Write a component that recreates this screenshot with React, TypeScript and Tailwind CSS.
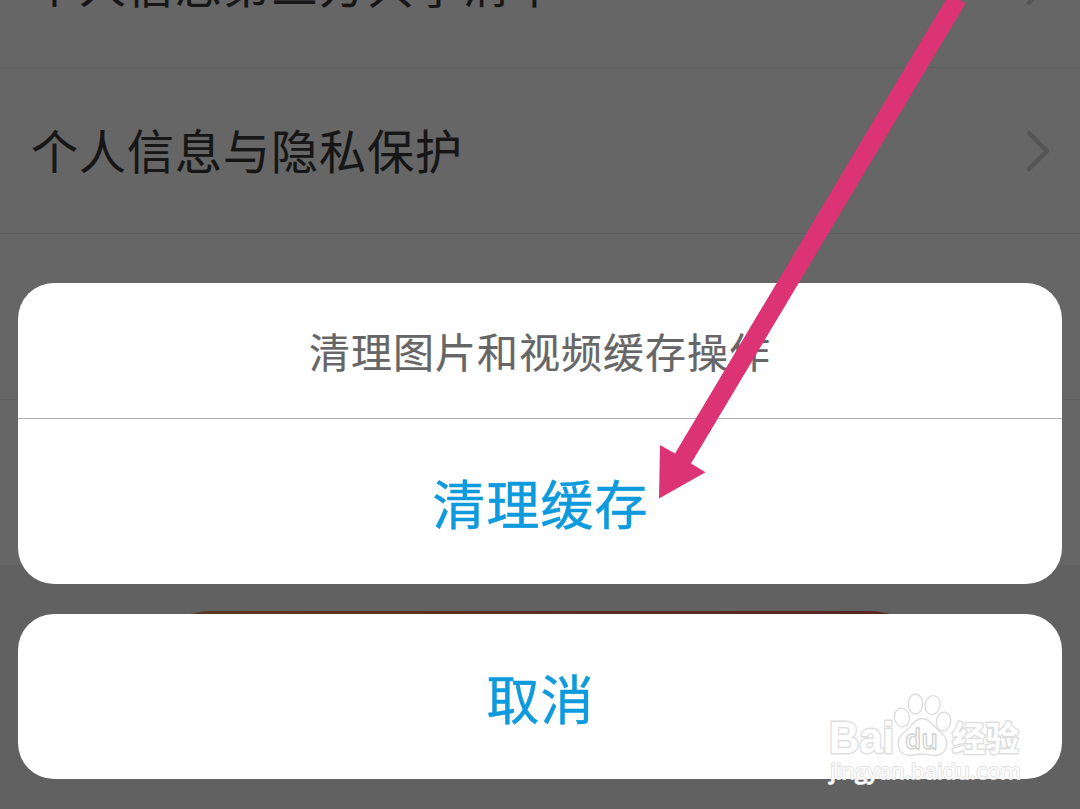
import React from "react";

const Chevron = () => (
  <svg width="26" height="44" viewBox="0 0 26 44" fill="none" className="mr-[29px] shrink-0">
    <path d="M4 4L22 22L4 40" stroke="#555555" strokeWidth="4.5" strokeLinecap="round" strokeLinejoin="round" />
  </svg>
);

const Row = ({ label }: { label?: string }) => (
  <div className="flex h-[166px] shrink-0 items-center justify-between border-b border-[#5f5f5f] pl-[31px]">
    <p className="pb-[4px] text-[47px] leading-[70px] tracking-[1px] text-[#161616] [-webkit-text-stroke:0.2px_#161616]">{label}</p>
    {label && <Chevron />}
  </div>
);

const Arrow = () => (
  <svg width="1080" height="809" viewBox="0 0 1080 809" className="pointer-events-none absolute inset-0">
    <path d="M949.5 -6.5L965.5 3.5L691 463.5L705.5 472.3L659 498.5L660 445L675 453.5Z" fill="#dc3374" />
  </svg>
);

const Watermark = () => (
  <svg width="210" height="100" viewBox="820 690 210 100" className="pointer-events-none absolute left-[820px] top-[690px]">
    <g fill="#fff" stroke="#dcdcdc" strokeWidth="1.3" strokeLinejoin="round">
      <ellipse cx="902" cy="717.5" rx="7.5" ry="9.5" transform="rotate(-8 902 717.5)" />
      <ellipse cx="915.5" cy="704" rx="7.2" ry="10" />
      <ellipse cx="932.5" cy="705" rx="7.5" ry="9.5" transform="rotate(10 932.5 705)" />
      <ellipse cx="943.5" cy="721.5" rx="7.2" ry="9.5" transform="rotate(8 943.5 721.5)" />
      <path d="M922 718.5C914 718.5 912 727 905 731.5C894 739 897 755 909 755.5C914 755.5 917 754 922 754C928 754 931 755.5 936 755.5C948 754 950 741 942 733.5C933 726 930 718.5 922 718.5Z" />
    </g>
    <g fill="#fff" stroke="#dedede" strokeLinejoin="round" fontWeight="700">
      <g strokeWidth="2.8" paintOrder="stroke">
        <text x="829" y="753" fontSize="44" textLength="65" lengthAdjust="spacingAndGlyphs" fontFamily="Liberation Sans, sans-serif">Bai</text>
        <text x="952" y="751" fontSize="34" textLength="67" lengthAdjust="spacingAndGlyphs" fontFamily="Noto Sans CJK SC, sans-serif">经验</text>
      </g>
      <text x="905" y="749" fontSize="27" textLength="33" lengthAdjust="spacingAndGlyphs" fontFamily="Open Sans, sans-serif" fontWeight="600" strokeWidth="1.3" stroke="#cfcfcf">du</text>
      <text x="830" y="779" fontSize="22" textLength="191" lengthAdjust="spacingAndGlyphs" fontFamily="Open Sans, sans-serif" fontWeight="400" strokeWidth="1.8" stroke="#e0e0e0" paintOrder="stroke">jingyan.baidu.com</text>
    </g>
  </svg>
);

const App = () => {
  return (
    <main className="relative flex h-[809px] w-[1080px] flex-col overflow-hidden bg-[#616161] font-['Noto_Sans_CJK_SC',sans-serif]">
      {/* dimmed settings list */}
      <section className="-mt-[98px] flex h-[663px] shrink-0 flex-col overflow-hidden bg-[#666666]">
        <Row label="个人信息第三方共享清单" />
        <Row label="个人信息与隐私保护" />
        <Row />
        <Row />
      </section>
      <div className="mx-auto mt-[46px] h-[120px] w-[780px] shrink-0 rounded-full bg-linear-to-r from-[#5c3820] to-[#5a2422]"></div>

      {/* action sheet */}
      <section className="absolute inset-x-[18px] bottom-[30px] space-y-[30px] text-center">
        <div className="h-[301px] overflow-hidden rounded-[36px] bg-white">
          <p className="flex h-[136px] items-center justify-center border-b border-[#b2b2b2] text-[41px] tracking-[1px] text-[#666666] [-webkit-text-stroke:0.2px_#666666]">清理图片和视频缓存操作</p>
          <button className="flex h-[165px] w-full items-center justify-center pl-px pt-[3px] text-[53px] tracking-[1px] text-[#0f9add] [-webkit-text-stroke:0.5px_#0f9add]">清理缓存</button>
        </div>
        <button className="flex h-[165px] w-full items-center justify-center rounded-[36px] bg-white pl-px pt-[3px] text-[53px] tracking-[1px] text-[#0f9add] [-webkit-text-stroke:0.5px_#0f9add]">取消</button>
      </section>
      <Arrow />
      <Watermark />
    </main>
  );
};

export default App;
